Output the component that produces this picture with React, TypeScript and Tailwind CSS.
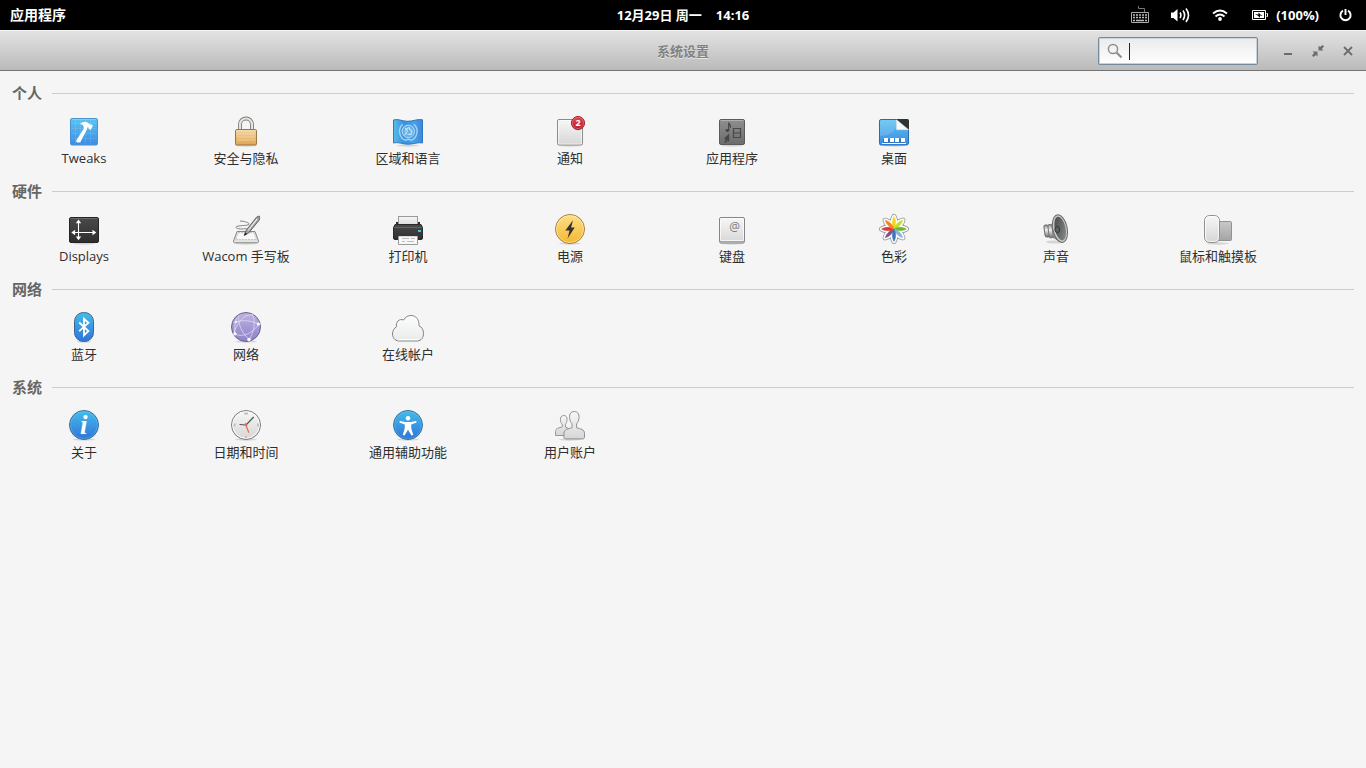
import type { ReactNode } from 'react';

type Item = { label: string; icon: ReactNode };
type Category = { title: string; items: Item[] };

function Icon({ children }: { children: ReactNode }) {
  return (
    <svg width="32" height="32" viewBox="0 0 32 32" fill="none" aria-hidden="true" className="block overflow-visible">
      {children}
    </svg>
  );
}

function Gradients() {
  return (
    <svg width="0" height="0" aria-hidden="true" className="absolute">
      <defs>
        <linearGradient id="blue" x1="0" y1="0" x2="0" y2="1">
          <stop offset="0" stopColor="#45bdea" />
          <stop offset="1" stopColor="#2f74da" />
        </linearGradient>
        <linearGradient id="sky" x1="0" y1="0" x2="0" y2="1">
          <stop offset="0" stopColor="#5cc3ef" />
          <stop offset="1" stopColor="#3b8ce6" />
        </linearGradient>
        <linearGradient id="flag" x1="0" y1="0" x2="1" y2="0">
          <stop offset="0" stopColor="#55bdec" />
          <stop offset="0.35" stopColor="#3a94de" />
          <stop offset="0.7" stopColor="#46a2ea" />
          <stop offset="1" stopColor="#3d86dc" />
        </linearGradient>
        <linearGradient id="gold" x1="0" y1="0" x2="0" y2="1">
          <stop offset="0" stopColor="#f3d5a2" />
          <stop offset="1" stopColor="#e0a552" />
        </linearGradient>
        <linearGradient id="yellow" x1="0" y1="0" x2="0" y2="1">
          <stop offset="0" stopColor="#fce08a" />
          <stop offset="1" stopColor="#f6b731" />
        </linearGradient>
        <linearGradient id="light" x1="0" y1="0" x2="0" y2="1">
          <stop offset="0" stopColor="#f7f7f7" />
          <stop offset="1" stopColor="#d6d6d6" />
        </linearGradient>
        <linearGradient id="cloud" x1="0" y1="0" x2="0" y2="1">
          <stop offset="0" stopColor="#fdfdfd" />
          <stop offset="1" stopColor="#e9ebeb" />
        </linearGradient>
        <linearGradient id="mid" x1="0" y1="0" x2="0" y2="1">
          <stop offset="0" stopColor="#8f8f8f" />
          <stop offset="1" stopColor="#6c6c6c" />
        </linearGradient>
        <linearGradient id="pad" x1="0" y1="0" x2="0" y2="1">
          <stop offset="0" stopColor="#c9c9c9" />
          <stop offset="1" stopColor="#a4a4a4" />
        </linearGradient>
        <linearGradient id="dark" x1="0" y1="0" x2="0" y2="1">
          <stop offset="0" stopColor="#4a4a4a" />
          <stop offset="1" stopColor="#2e2e2e" />
        </linearGradient>
        <linearGradient id="red" x1="0" y1="0" x2="0" y2="1">
          <stop offset="0" stopColor="#e2484f" />
          <stop offset="1" stopColor="#b51d2c" />
        </linearGradient>
        <linearGradient id="purple" x1="0" y1="0" x2="0" y2="1">
          <stop offset="0" stopColor="#bdb2dd" />
          <stop offset="1" stopColor="#8f82cb" />
        </linearGradient>
        <linearGradient id="metal" x1="0" y1="0" x2="0" y2="1">
          <stop offset="0" stopColor="#8f8f8f" />
          <stop offset="0.4" stopColor="#f2f2f2" />
          <stop offset="1" stopColor="#6f6f6f" />
        </linearGradient>
        <linearGradient id="cone" x1="0" y1="0" x2="1" y2="1">
          <stop offset="0" stopColor="#3f4240" />
          <stop offset="1" stopColor="#8d918f" />
        </linearGradient>
      </defs>
    </svg>
  );
}

const shadow = <ellipse cx="16" cy="30.5" rx="11" ry="1.2" fill="#000" opacity=".13" />;

const tweaks = (
  <Icon>
    <rect x="2.5" y="3.5" width="27" height="26.5" rx="1.5" fill="url(#sky)" stroke="#4a92d0" />
    <path d="M3.5 8.5h25M3.5 13.5h25M3.5 18.5h25M3.5 23.5h25M7.5 4.5v25M12.5 4.5v25M17.5 4.5v25M22.5 4.5v25" stroke="#fff" opacity=".1" />
    <path d="M3.5 4.5h25" stroke="#a4e1fa" opacity=".5" />
    <path d="M8.2 25.5 15.8 13.6 15.6 11.4C14.9 9.7 13.8 9.2 12.2 9.3 14.2 6.6 17.4 6.2 20 7.8L22.2 9.6 23.4 9.4 25 10.6 22.6 15 20.8 14 20.4 12.4 19.4 12.2 18.8 14.8 12.4 27C10.8 28.2 7.6 27.5 8.2 25.5Z" fill="#fff" />
  </Icon>
);

const lock = (
  <Icon>
    {shadow}
    <path d="M10 15V9.5a6 6 0 0 1 12 0V15" stroke="#7c7f7a" strokeWidth="4" />
    <path d="M10 15V9.5a6 6 0 0 1 12 0V15" stroke="#e4e4e1" strokeWidth="2.2" />
    <rect x="5.5" y="14.5" width="21" height="15.5" rx="1.2" fill="url(#gold)" stroke="#9c7544" />
    <path d="M7 16h18M7 19h18M7 22h18M7 25h18" stroke="#fff0ce" opacity=".4" />
  </Icon>
);

const language = (
  <Icon>
    {shadow}
    <path d="M1.5 5C6 3.5 9 6 15 6.3S25 3.6 30.5 4.8V28C26 26.8 22 29.2 16 29.2S6 26.5 1.5 28Z" fill="url(#flag)" stroke="#2f78bd" />
    <path d="M10.8 9.4C5.8 13 6.4 22 13.3 25.4M21.8 9.4C26.8 13 26.2 22 19.3 25.4M13.3 25.4l3-1.4 3 1.4" stroke="#a5d2f3" strokeWidth="1.4" />
    <circle cx="16.3" cy="16.4" r="6.2" fill="#62b0e8" stroke="#b7daf4" />
    <circle cx="16.3" cy="16.4" r="3.2" stroke="#a3cff0" />
    <path d="M12.3 20.4l3-3.6-.8-3 2.6-1.4.8 2.6 2.4 1.4-1.2 3.4-3-.8M13 13l3 3" stroke="#d3eafa" strokeWidth=".9" />
  </Icon>
);

const notice = (
  <Icon>
    {shadow}
    <rect x="3.5" y="4.5" width="25" height="25.5" rx="1.5" fill="url(#light)" stroke="#8b8b8b" />
    <rect x="4.5" y="5.5" width="23" height="23.5" rx="1" stroke="#fff" opacity=".6" />
    <circle cx="24" cy="8.6" r="7" fill="#000" opacity=".15" />
    <circle cx="24" cy="8" r="6.5" fill="url(#red)" stroke="#a71b2b" />
    <circle cx="24" cy="8" r="5.6" stroke="#ee858b" strokeWidth=".7" opacity=".7" />
    <text x="24" y="11.2" textAnchor="middle" fontSize="9" fontWeight="700" fontFamily="Open Sans, sans-serif" fill="#fff">2</text>
  </Icon>
);

const applications = (
  <Icon>
    {shadow}
    <rect x="3.5" y="4.5" width="25" height="25" rx="1.5" fill="url(#mid)" stroke="#5b5b5b" />
    <path d="M4.5 5.5h23" stroke="#bdbdbd" opacity=".7" />
    <path d="M12.7 15.2V7.6c.4 2 2.2 2.3 1.8 5" stroke="#464646" strokeWidth="1.2" />
    <ellipse cx="11.4" cy="15.5" rx="1.9" ry="1.4" fill="#464646" />
    <path d="M17.5 13.5h7v9h-7zM17.5 18h7" stroke="#484848" strokeWidth="1.2" />
    <path d="M13.2 18.5v8.4l-1.8-1.5-1.8 2.6-1.4-1 1.8-2.6-2.2-.7z" fill="#464646" />
  </Icon>
);

const desktop = (
  <Icon>
    {shadow}
    <path d="M3 4.5h16L30.5 15v13a2 2 0 0 1-2 2H3a1.5 1.5 0 0 1-1.5-1.5V6A1.5 1.5 0 0 1 3 4.5Z" fill="url(#sky)" stroke="#276cac" />
    <path d="M2 21C14 21 19 14 20 5H3L2 6Z" fill="#fff" opacity=".14" />
    <path d="M18 4h11.5A1.5 1.5 0 0 1 31 5.5V15Z" fill="#303336" />
    <path d="M18.5 4.7v10h12Z" fill="#f8f8f8" stroke="#dedede" strokeWidth=".5" />
    <path d="M5 24h22v5H5z" fill="#2f74bd" />
    <path d="M6 23h4v4H6zM12 23h4v4h-4zM17 23h4v4h-4zM23 23h4v4h-4zM4 28h24v1H4z" fill="#fff" />
  </Icon>
);

const displays = (
  <Icon>
    {shadow}
    <rect x="1.5" y="4.5" width="29" height="25" rx="1.5" fill="url(#dark)" stroke="#242424" />
    <path d="M2.5 5.5h27" stroke="#888" opacity=".5" />
    <path d="M10.5 9v16M6 19.5h20" stroke="#fff" strokeWidth="1.1" />
    <path d="M10.5 6.5 13.2 10.3H7.8zM10.5 27.3 13.2 23.5H7.8zM3.3 19.5 7.1 16.8v5.4zM28.3 19.5 24.5 16.8v5.4z" fill="#fff" />
  </Icon>
);

const wacom = (
  <Icon>
    {shadow}
    <path d="M7 18.5h18L28.5 28a1.5 1.5 0 0 1-1 1.8h-23a1.5 1.5 0 0 1-1-1.8Z" fill="#e4e4e2" stroke="#858783" />
    <path d="M8 19.8h16l2.6 6.8H5.5Z" fill="#f8f8f8" stroke="#b4b6b2" strokeWidth=".8" strokeDasharray="2 1" />
    <path d="M10 8c4 0 10 1.9 9 3.3-1.4 1.9-14 .8-13 3.2.6 1.7 7 1.8 10.5 1" stroke="#7f837e" />
    <path d="M14.2 22.6 16 17.5 26.5 4.2Q29 2.6 29.5 3.3 30 5.8 29 7.4L18.6 20Z" fill="#9a9d99" stroke="#5b5e5b" strokeWidth=".9" />
    <path d="m18 17.5 9.3-11.7" stroke="#eee" strokeWidth="1.2" />
    <path d="m14.2 22.6.9-3 2 1.4z" fill="#222" />
  </Icon>
);

const printer = (
  <Icon>
    <path d="M4 9h24v5H4z" fill="#2c2c2c" />
    <rect x="6.5" y="3.5" width="19" height="10" fill="url(#light)" stroke="#9a9a9a" />
    <path d="M3 11.5h26l1.5 3V25a1.5 1.5 0 0 1-1.5 1.5H3A1.5 1.5 0 0 1 1.5 25V14.5Z" fill="url(#dark)" stroke="#2a2a2a" />
    <path d="M2.5 14.5h27" stroke="#707070" opacity=".7" />
    <rect x="26" y="17" width="3" height="2" fill="#3fc0eb" />
    <path d="M6.5 23.5h19v8h-19z" fill="#f7f7f7" stroke="#9b9b9b" />
    <path d="M7 23.5h18" stroke="#d9d9d9" />
    <path d="M10 25.5h7M19 25.5h4M10 28.5h3M15 28.5h7" stroke="#bdbdbd" />
  </Icon>
);

const power = (
  <Icon>
    {shadow}
    <circle cx="16" cy="16" r="14.5" fill="url(#yellow)" stroke="#a57c41" />
    <circle cx="16" cy="16" r="13.5" stroke="#ffeeb3" opacity=".6" />
    <path d="M19 7.3 11.3 17.5h4.2l-1.9 8.1 7.1-11h-3.6z" fill="#333230" />
  </Icon>
);

const keyboard = (
  <Icon>
    {shadow}
    <rect x="3.5" y="4.5" width="25" height="25.5" rx="1.5" fill="url(#light)" stroke="#858585" />
    <path d="M4 28.5h24" stroke="#a6a6a6" />
    <rect x="4.5" y="5.5" width="23" height="22" rx="1" stroke="#fff" opacity=".7" />
    <text x="18.7" y="17.5" textAnchor="middle" fontSize="12" fontFamily="Open Sans, sans-serif" fill="#7a7a7a">@</text>
  </Icon>
);

const petals = ['#f4d51c', '#c5dc27', '#69b92e', '#83b4e5', '#3976bb', '#7d5389', '#df3737', '#f5831f'];
const petalPath = 'M16 16C13.4 11.5 14.3 6.5 16 3.6 17.7 6.5 18.6 11.5 16 16Z';

const color = (
  <Icon>
    <g stroke="#9b9b9b" strokeWidth="5.2" strokeLinejoin="round">
      {petals.map((fill, i) => (
        <path key={fill} d={petalPath} transform={`rotate(${i * 45} 16 16)`} />
      ))}
    </g>
    <g stroke="#fff" strokeWidth="3.6" strokeLinejoin="round">
      {petals.map((fill, i) => (
        <path key={fill} d={petalPath} transform={`rotate(${i * 45} 16 16)`} />
      ))}
    </g>
    {petals.map((fill, i) => (
      <path key={fill} d={petalPath} fill={fill} stroke={fill} strokeWidth=".5" transform={`rotate(${i * 45} 16 16)`} />
    ))}
  </Icon>
);

const sound = (
  <Icon>
    <ellipse cx="15" cy="29" rx="9" ry="1.6" fill="#000" opacity=".13" />
    <path d="M10 13.5C13 11 14 6 16 2.5L23 29C18 29 16 24.5 11 24Z" fill="url(#metal)" stroke="#707070" />
    <rect x="4.5" y="12" width="4.5" height="12" rx="2.2" transform="rotate(-8 7 18)" fill="url(#metal)" stroke="#6b6b6b" />
    <rect x="8.5" y="11.5" width="4" height="13.5" rx="2" transform="rotate(-8 10 18)" fill="url(#metal)" stroke="#777" />
    <ellipse cx="20" cy="15.6" rx="7.2" ry="14" transform="rotate(-12 20 15.6)" fill="#c9cac7" stroke="#6c6d6a" />
    <ellipse cx="20.2" cy="15.5" rx="5.4" ry="12" transform="rotate(-12 20.2 15.5)" fill="url(#cone)" />
    <ellipse cx="17.3" cy="16.5" rx="2.4" ry="3" fill="#5d615f" stroke="#343635" />
  </Icon>
);

const mouse = (
  <Icon>
    {shadow}
    <rect x="14.5" y="8.5" width="15" height="19" rx="1" fill="url(#pad)" stroke="#929292" />
    <rect x="2.5" y="2.5" width="15" height="27" rx="5" fill="url(#light)" stroke="#8f8f8f" />
    <rect x="3.5" y="3.5" width="13" height="25" rx="4" stroke="#fff" opacity=".7" />
  </Icon>
);

const bluetooth = (
  <Icon>
    <ellipse cx="16" cy="30.6" rx="7" ry="1.2" fill="#000" opacity=".13" />
    <rect x="6.5" y="1.5" width="19" height="29" rx="9" fill="url(#blue)" stroke="#3a668d" />
    <path d="m11.2 11.5 9.2 8.5-4.4 4.3V7.8l4.4 4-9.2 8.3" stroke="#fff" strokeWidth="1.8" />
  </Icon>
);

const network = (
  <Icon>
    {shadow}
    <circle cx="16" cy="16" r="14.5" fill="url(#purple)" stroke="#686390" />
    <path d="M4 23C6 12 15 2 23 4M3.5 11.5C13 8 25 10 29 14M9 4c-2 7 3 19 10 24M22.5 3.5C26 11 24 21 19 29M4.5 23c9 4 18-1 24.5-10M6.5 7C5 12 4 18 5 23" stroke="#e6e0fa" strokeWidth="1" opacity=".7" />
    <g fill="#fff"><circle cx="5" cy="22.8" r="1.6" /><circle cx="28.4" cy="13" r="1.6" /><circle cx="19" cy="28.4" r="1.7" /><circle cx="6" cy="11" r="1" /></g>
  </Icon>
);

const cloud = (
  <Icon>
    <path d="M6.5 30C2.8 29.6.5 26.5.5 23c0-3.4 1.7-6 4-7.2C3.5 11 7.3 7.3 11.6 9 13.5 5.8 16 4.5 19 4.5c5 0 8.3 4 8 10.3 3 1.4 4.5 4 4.5 7.7 0 4.1-2.2 7.2-6 7.5Z" fill="url(#cloud)" stroke="#858585" />
    <path d="M6 28.7h20" stroke="#fff" />
  </Icon>
);

const about = (
  <Icon>
    {shadow}
    <circle cx="16" cy="16" r="14.5" fill="url(#blue)" stroke="#3d6d9b" />
    <circle cx="16" cy="16" r="13.5" stroke="#70d2f2" opacity=".35" />
    <text x="15.8" y="25" textAnchor="middle" fontSize="27" fontWeight="700" fontStyle="italic" fontFamily="Liberation Serif, serif" fill="#fff">i</text>
  </Icon>
);

const clock = (
  <Icon>
    {shadow}
    <circle cx="16" cy="16" r="14.5" fill="url(#light)" stroke="#7b7b7b" />
    <circle cx="16" cy="16" r="13.3" stroke="#fafafa" />
    <path d="M14 4.5h4M15 28h2M4.5 14.5v3M28 14.5v3" stroke="#c0c0c0" strokeWidth="2" />
    <path d="m16 16 7.7-8M16 16l-6.5-.5" stroke="#555" strokeWidth="1.2" />
    <path d="m15.3 14.3 3.5 9.5" stroke="#ed6751" strokeWidth="1.2" />
    <circle cx="16" cy="16" r="1.3" fill="#e76450" />
  </Icon>
);

const accessibility = (
  <Icon>
    {shadow}
    <circle cx="16" cy="16" r="14.5" fill="url(#blue)" stroke="#3d6d9b" />
    <circle cx="16" cy="16" r="13.5" stroke="#70d2f2" opacity=".35" />
    <circle cx="16" cy="9.2" r="2.2" fill="#fff" />
    <path d="m7.8 12 5.2 1h6l5.2-1 .4 1.5-5.4 1.9.1 4 2 6.5-1.9.7L16 20.8l-3.4 5.8-1.9-.7 2-6.5.1-4-5.4-1.9Z" fill="#fff" />
  </Icon>
);

const users = (
  <Icon>
    {shadow}
    <path d="M9.8 6.5c2.3 0 3.4 1.7 3.2 4.3-.2 2.4-.8 3.6-1.6 4.4v2.9c2.6 1 5 1.5 5 4.9v3.5H1.5v-4c0-3.4 3.9-3.6 6.7-4.6v-2.7c-.9-.8-1.6-2-1.8-4.4-.2-2.6 1.1-4.3 3.4-4.3Z" fill="url(#light)" stroke="#989898" />
    <path d="M20.3 2.5c3.2 0 5 2.4 4.7 6-.2 3.1-1.1 5-2.4 6.2v4c3.8 1.3 7.9 1.6 7.9 5.6v4c0 .8-.6 1.6-2 1.6H11.9c-1.3 0-2-.8-2-1.6v-4c0-4 4.3-4.3 8.1-5.6v-4c-1.3-1.2-2.2-3.1-2.4-6.2-.3-3.6 1.5-6 4.7-6Z" fill="url(#light)" stroke="#8e8e8e" />
  </Icon>
);

const categories: Category[] = [
  {
    title: '个人',
    items: [
      { label: 'Tweaks', icon: tweaks },
      { label: '安全与隐私', icon: lock },
      { label: '区域和语言', icon: language },
      { label: '通知', icon: notice },
      { label: '应用程序', icon: applications },
      { label: '桌面', icon: desktop },
    ],
  },
  {
    title: '硬件',
    items: [
      { label: 'Displays', icon: displays },
      { label: 'Wacom 手写板', icon: wacom },
      { label: '打印机', icon: printer },
      { label: '电源', icon: power },
      { label: '键盘', icon: keyboard },
      { label: '色彩', icon: color },
      { label: '声音', icon: sound },
      { label: '鼠标和触摸板', icon: mouse },
    ],
  },
  {
    title: '网络',
    items: [
      { label: '蓝牙', icon: bluetooth },
      { label: '网络', icon: network },
      { label: '在线帐户', icon: cloud },
    ],
  },
  {
    title: '系统',
    items: [
      { label: '关于', icon: about },
      { label: '日期和时间', icon: clock },
      { label: '通用辅助功能', icon: accessibility },
      { label: '用户账户', icon: users },
    ],
  },
];

function TopPanel() {
  return (
    <header className="grid h-[30px] grid-cols-[1fr_auto_1fr] items-center bg-black text-[13px] leading-5 font-bold text-white">
      <button type="button" className="justify-self-start pl-[10px] text-[14px]">应用程序</button>
      <button type="button" className="flex gap-[14px]">
        <span>12月29日 周一</span>
        <span>14:16</span>
      </button>
      <div className="flex items-center justify-self-end pr-[14px]">
        <button type="button" aria-label="键盘布局" className="mr-[21px]">
          <svg width="19" height="18" viewBox="0 0 19 18" fill="none" className="block" aria-hidden="true">
            <path d="M7.5 0v2.5h6V6" stroke="#777" />
            <path d="M.5 6.5h17v10H.5z" stroke="#aaa" />
            <path d="M2 9h14M2 11.5h14" stroke="#bbb" strokeWidth="1.6" strokeDasharray="2 1" />
            <path d="M2 14.5h2M5 14.5h8M14 14.5h2" stroke="#bbb" strokeWidth="1.6" />
          </svg>
        </button>
        <button type="button" aria-label="音量" className="mr-[21px]">
          <svg width="20" height="16" viewBox="0 0 20 16" fill="none" className="block" aria-hidden="true">
            <path d="M0 5.5h2.5L6.5 2v12.5L2.5 11H0Z" fill="#fff" />
            <path d="M9 5.5q1.8 2.7 0 5.5M12 3.5q3.2 4.7 0 9.5M15 1.5q5 6.7 0 13.5" stroke="#fff" strokeWidth="1.6" />
          </svg>
        </button>
        <button type="button" aria-label="无线网络" className="mr-6">
          <svg width="16" height="12" viewBox="0 0 16 12" fill="none" className="block" aria-hidden="true">
            <path d="M1 4.5Q8-1.5 15 4.5M3.5 7.5q4.5-4 9 0" stroke="#fff" strokeWidth="1.9" />
            <circle cx="8" cy="10" r="1.9" fill="#fff" />
          </svg>
        </button>
        <button type="button" className="mr-5 flex items-center gap-2">
          <svg width="16" height="10" viewBox="0 0 16 10" fill="none" className="block" aria-hidden="true">
            <path d="M.5.5h13v9H.5zM14.5 3.5h1v3h-1" stroke="#fff" />
            <path d="M2 2h10v6H2z" fill="#fff" />
            <path d="m3 4 3.5.6V2.5l2 2 2.5 1.3-3-.4v2.3L5.9 5.7Z" fill="#000" />
          </svg>
          <span>(100%)</span>
        </button>
        <button type="button" aria-label="电源">
          <svg width="13" height="14" viewBox="0 0 13 14" fill="none" className="block" aria-hidden="true">
            <path d="M4 2.7a5.1 5.1 0 1 0 5 0M6.5 1v6" stroke="#fff" strokeWidth="1.9" />
          </svg>
        </button>
      </div>
    </header>
  );
}

function TitleBar() {
  return (
    <div className="grid h-[41px] grid-cols-[1fr_auto_1fr] items-center border-t border-b border-t-[#f4f4f4] border-b-[#747474] bg-linear-to-b from-[#e3e3e3] to-[#bababa]">
      <h1 className="col-start-2 text-[13px] leading-5 font-bold text-[#818181] [text-shadow:0_1px_0_#e6e6e6]">系统设置</h1>
      <div className="flex items-center justify-self-end pr-3">
        <div className="relative mr-6">
          <svg width="16" height="16" viewBox="0 0 16 16" fill="none" className="absolute top-[6px] left-[9px]" aria-hidden="true">
            <circle cx="6" cy="6" r="4.6" stroke="#8f8f8f" strokeWidth="1.5" />
            <path d="m9.5 9.5 5 5" stroke="#8f8f8f" strokeWidth="2.1" />
          </svg>
          <input
            type="search"
            aria-label="搜索设置"
            className="block h-7 w-40 rounded-[2px] border border-[#758b9b] bg-linear-to-b from-[#ebebeb] to-white pr-2 pl-[31px] text-[13px] text-[#333] caret-transparent shadow-[inset_0_0_0_1px_#c7d2da] outline-none"
          />
          <span className="pointer-events-none absolute top-[6px] left-[31px] h-[17px] w-px bg-[#222]" />
        </div>
        <div className="flex items-center gap-[18px] text-[#6c6c6c]">
          <button type="button" aria-label="最小化">
            <svg width="12" height="12" viewBox="0 0 12 12" fill="none" className="block" aria-hidden="true"><path d="M2 9h8" stroke="currentColor" strokeWidth="2" /></svg>
          </button>
          <button type="button" aria-label="还原">
            <svg width="12" height="12" viewBox="0 0 12 12" fill="currentColor" className="block" aria-hidden="true"><path d="M6.5.5 8 2l2.5-2L12 1.5 9.8 4l1.7 1.5h-5zM.5 6.5h5v5L4 10l-2.5 2L0 10.5 2.2 8z" /></svg>
          </button>
          <button type="button" aria-label="关闭">
            <svg width="12" height="12" viewBox="0 0 12 12" fill="none" className="block" aria-hidden="true"><path d="m2 2 8 8M10 2l-8 8" stroke="currentColor" strokeWidth="1.8" /></svg>
          </button>
        </div>
      </div>
    </div>
  );
}

function CategorySection({ title, items }: Category) {
  return (
    <section className="pb-[14px]">
      <div className="flex items-center gap-[10px] px-3">
        <h2 className="text-[15px] leading-5 font-bold text-[#666]">{title}</h2>
        <div className="h-px flex-1 bg-[#cccccc]" />
      </div>
      <ul className="mt-3 grid grid-cols-[repeat(auto-fill,162px)] pl-[3px]">
        {items.map((item) => (
          <li key={item.label} className="flex justify-center">
            <button type="button" className="flex flex-col items-center">
              {item.icon}
              <span className="mt-[2px] text-[13px] leading-[18px] text-[#2e2e2e]">{item.label}</span>
            </button>
          </li>
        ))}
      </ul>
    </section>
  );
}

export default function App() {
  return (
    <div className="min-h-screen bg-[#f5f5f5] font-['Open_Sans','Noto_Sans_CJK_SC',sans-serif]">
      <Gradients />
      <TopPanel />
      <TitleBar />
      <main className="pt-3">
        {categories.map((category) => (
          <CategorySection key={category.title} {...category} />
        ))}
      </main>
    </div>
  );
}
